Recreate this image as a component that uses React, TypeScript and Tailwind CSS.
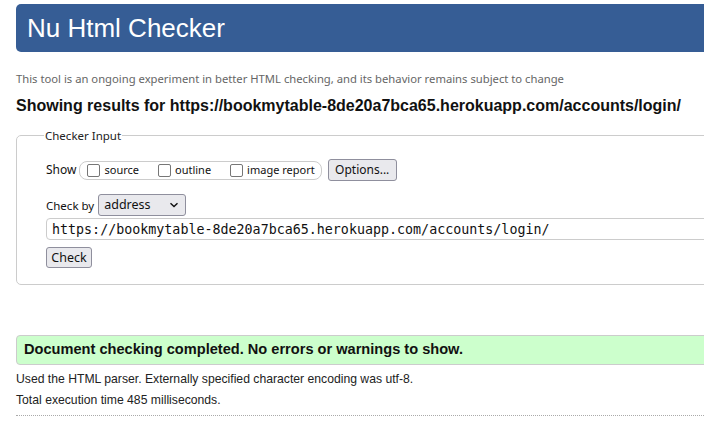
import React from "react";

const ui = { fontFamily: '"Noto Sans", "Open Sans", sans-serif' };
const arial = { fontFamily: '"Liberation Sans", Arial, sans-serif' };
const mono = { fontFamily: '"DejaVu Sans Mono", "Liberation Mono", monospace' };

function Box({ label }: { label: string }) {
  return (
    <label className="flex items-center gap-[4px]">
      <span className="w-[13px] h-[13px] border border-[#767676] rounded-[2px] bg-white inline-block" />
      <span className="text-[11px] text-[#111]">{label}</span>
    </label>
  );
}

export default function App() {
  return (
    <div className="w-[704px] h-[436px] overflow-hidden bg-white relative" style={arial}>
      <div className="w-[800px] pl-[16px] pt-[4px]">
        <div className="h-[48px] bg-[#365d95] rounded-l-[5px] flex items-center pl-[11px]">
          <h1 className="text-white text-[26px] leading-none" style={arial}>Nu Html Checker</h1>
        </div>
        <p className="mt-[19px] text-[11.25px] text-[#666] leading-[16px]" style={ui}>
          This tool is an ongoing experiment in better HTML checking, and its behavior remains subject to change
        </p>
        <h2 className="mt-[9px] text-[16px] font-bold text-[#111] leading-[20px]" style={arial}>
          Showing results for https://bookmytable-8de20a7bca65.herokuapp.com/accounts/login/
        </h2>
        <fieldset className="mt-[11px] border border-[#ccc] rounded-l-[5px] h-[158px] pl-[29px] pt-[14px]" style={ui}>
          <legend className="ml-[-2px] px-[1px] text-[11.5px] text-[#222]">Checker Input</legend>
          <div className="flex items-center h-[22px] mt-[1px]">
            <span className="text-[12px] text-[#111] mr-[3px]">Show</span>
            <div className="h-[19px] border border-[#ccc] rounded-[8px] pl-[7px] pr-[6px] flex items-center gap-[19px]">
              <Box label="source" />
              <Box label="outline" />
              <Box label="image report" />
            </div>
            <button className="ml-[6px] w-[69px] h-[22px] bg-[#e9e9ed] border border-[#8f8f9d] rounded-[3px] text-[12px] text-[#111] leading-none">
              Options...
            </button>
          </div>
          <div className="flex items-center mt-[13px] h-[22px]">
            <span className="text-[11.5px] text-[#111] mr-[4px]">Check by</span>
            <div className="w-[88px] h-[22px] bg-[#e9e9ed] border border-[#8f8f9d] rounded-[3px] flex items-center justify-between pl-[5px] pr-[6px]">
              <span className="text-[12.5px] text-[#111] leading-none">address</span>
              <svg width="10" height="6" viewBox="0 0 10 6">
                <path d="M1.5 1.2 L5 4.6 L8.5 1.2" fill="none" stroke="#111" strokeWidth="1.4" />
              </svg>
            </div>
          </div>
          <div className="mt-[2px] h-[22px] border border-[#ccc] rounded-l-[4px] flex items-center pl-[5px]">
            <span className="text-[13.33px] text-[#111] leading-none" style={mono}>
              https://bookmytable-8de20a7bca65.herokuapp.com/accounts/login/
            </span>
          </div>
          <button className="mt-[7px] h-[21px] w-[46px] bg-[#e9e9ed] border border-[#8f8f9d] rounded-[3px] text-[12.5px] text-[#111] leading-none flex items-center justify-center">
            Check
          </button>
        </fieldset>
        <div className="mt-[50px] h-[30px] bg-[#ccffcc] border border-[#ccc] rounded-l-[4px] flex items-center pl-[7px]">
          <span className="text-[14.6px] font-bold text-[#111]" style={arial}>
            Document checking completed. No errors or warnings to show.
          </span>
        </div>
        <p className="mt-[6px] text-[12.2px] text-[#222] leading-[16px]" style={arial}>
          Used the HTML parser. Externally specified character encoding was utf-8.
        </p>
        <p className="mt-[5px] text-[12.2px] text-[#222] leading-[16px]" style={arial}>
          Total execution time 485 milliseconds.
        </p>
        <div className="mt-[7px] border-t border-dotted border-[#aaa]" />
      </div>
    </div>
  );
}
